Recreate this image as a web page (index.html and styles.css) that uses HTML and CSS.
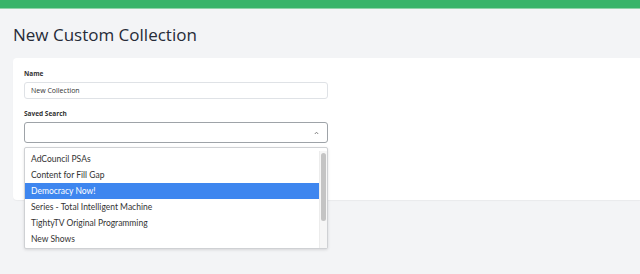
FILE: index.html
```html
<!DOCTYPE html>
<html>
<head>
    <title>New Custom Collection</title>
    <link rel="stylesheet" href="styles.css">
</head>
<body>
    <div class="topbar"></div>
    <div class="page">
        <h1>New Custom Collection</h1>
        <div class="card">
            <form id="collectionForm">
                <label for="name">Name</label>
                <input type="text" id="name" class="field" value="New Collection">

                <label for="search">Saved Search</label>
                <div class="select-wrap">
                    <div class="select" id="search">
                        <svg class="caret" width="5" height="4" viewBox="0 0 5 4">
                            <path d="M0.8 3 L2.5 1.2 L4.2 3" fill="none" stroke="#777" stroke-width="0.9"/>
                        </svg>
                    </div>
                    <div class="dropdown">
                        <ul class="options">
                            <li>AdCouncil PSAs</li>
                            <li>Content for Fill Gap</li>
                            <li class="active">Democracy Now!</li>
                            <li>Series - Total Intelligent Machine</li>
                            <li>TightyTV Original Programming</li>
                            <li>New Shows</li>
                        </ul>
                        <div class="scrollbar"><div class="thumb"></div></div>
                    </div>
                </div>
            </form>
        </div>
    </div>
</body>
</html>
```

FILE: styles.css
```css
html, body {
    height: 100%;
}
body {
    margin: 0;
    padding: 0;
    font-family: "Open Sans", Lato, sans-serif;
    background-color: #f3f4f6;
    color: #2a2f3a;
}
.topbar {
    height: 9px;
    background: #38b46a;
    border-bottom: 1px solid #8fd3a9;
    box-sizing: border-box;
}
.page {
    padding-left: 13px;
}
h1 {
    margin: 14px 0 11px 0;
    font-size: 17px;
    line-height: 24px;
    font-weight: 400;
    color: #262b38;
}
.card {
    position: relative;
    background: #fff;
    border-radius: 4px 0 0 4px;
    padding: 12px 11px 57px 11px;
    box-shadow: 0 1px 1px rgba(0, 0, 0, 0.04);
}
label {
    display: block;
    font-size: 6.5px;
    line-height: 8px;
    font-weight: 700;
    color: #333;
    margin-bottom: 4px;
}
.field {
    display: block;
    box-sizing: border-box;
    width: 304px;
    height: 17px;
    margin: 0 0 11px 0;
    padding: 0 6px;
    border: 1px solid #dfe2e6;
    border-radius: 3px;
    font-family: inherit;
    font-size: 7px;
    color: #333;
    outline: none;
}
.select-wrap {
    position: relative;
    width: 304px;
}
.select {
    box-sizing: border-box;
    height: 21px;
    border: 1px solid #9ea3a8;
    border-radius: 3px;
    display: flex;
    align-items: center;
    justify-content: flex-end;
    padding-right: 8px;
}
.dropdown {
    position: absolute;
    z-index: 10;
    top: 25px;
    left: 0;
    width: 304px;
    height: 102px;
    box-sizing: border-box;
    background: #fff;
    border: 1px solid #cfd1d4;
    border-radius: 2px;
    box-shadow: 0 1px 3px rgba(0, 0, 0, 0.12);
    padding: 3px 0 0 0;
    display: flex;
}
.options {
    list-style-type: none;
    margin: 0;
    padding: 0;
    flex: 1;
}
.options li {
    height: 16px;
    line-height: 16px;
    padding-left: 6px;
    font-family: Lato, "Open Sans", sans-serif;
    font-size: 8.5px;
    color: #333;
}
.options li.active {
    background: #3e86ef;
    color: #fff;
}
.scrollbar {
    width: 8px;
    padding: 2px 1px;
    box-sizing: border-box;
    background: #f6f6f6;
    border-left: 1px solid #ececec;
}
.thumb {
    height: 68px;
    background: #c4c4c4;
    border-radius: 3px;
}
```
